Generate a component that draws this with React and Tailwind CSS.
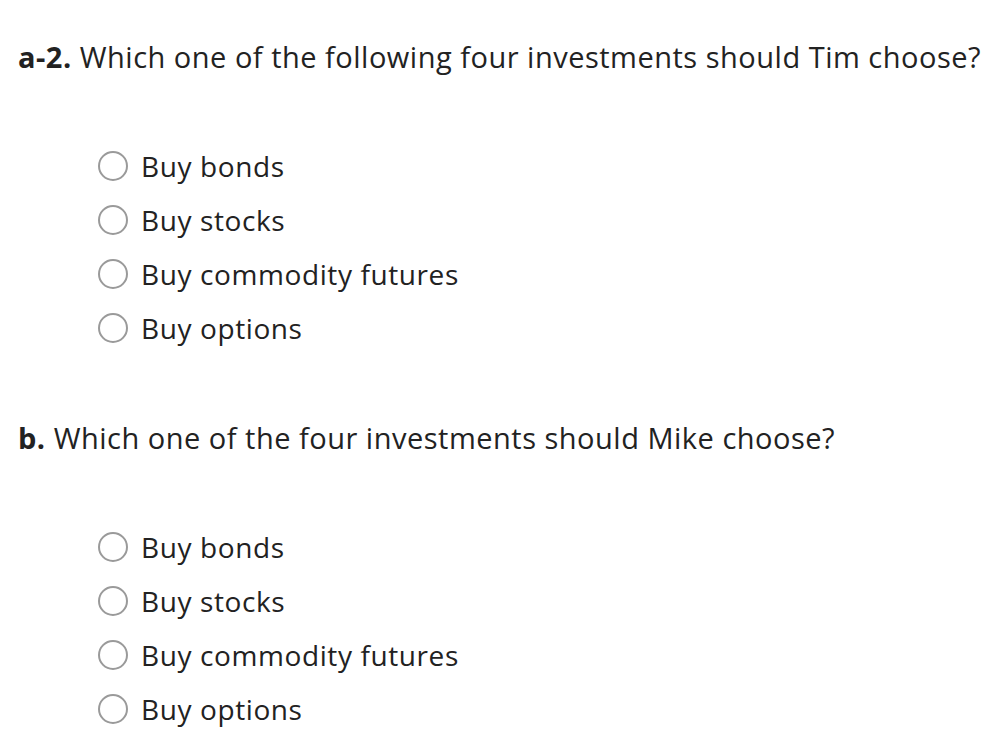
const options = ['Buy bonds', 'Buy stocks', 'Buy commodity futures', 'Buy options']

function Radio() {
  return (
    <span className="inline-block w-[30px] h-[30px] rounded-full border-[2.5px] border-[#9a9a9a] bg-white shrink-0" />
  )
}

function Question({ label, text }) {
  return (
    <div>
      <div className="h-[40px] leading-[40px] text-[29px] tracking-[0.5px] text-[#222] pl-[18px] whitespace-nowrap">
        <span className="font-bold">{label}</span> {text}
      </div>
      <div className="mt-[62px] pl-[98px]">
        {options.map(o => (
          <label key={o} className="h-[54px] flex items-center gap-[13px] text-[28px] tracking-[0.6px] text-[#222]">
            <Radio />
            <span>{o}</span>
          </label>
        ))}
      </div>
    </div>
  )
}

export default function App() {
  return (
    <div className="w-[994px] h-[737px] bg-white overflow-hidden pt-[37px]" style={{ fontFamily: '"Open Sans", "Noto Sans", sans-serif' }}>
      <Question label="a-2." text="Which one of the following four investments should Tim choose?" />
      <div className="mt-[63px]">
        <Question label="b." text="Which one of the four investments should Mike choose?" />
      </div>
    </div>
  )
}
